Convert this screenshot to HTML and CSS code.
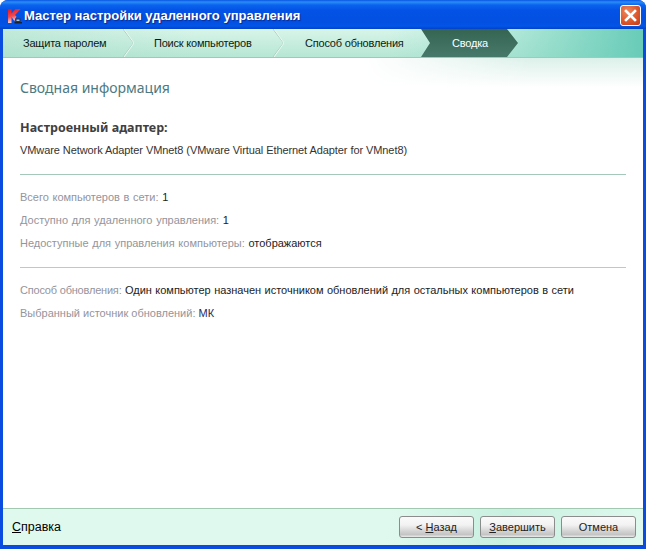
FILE: index.html
```html
<!DOCTYPE html>
<html lang="ru">
<head>
<meta charset="utf-8">
<title>Мастер настройки удаленного управления</title>
<link rel="stylesheet" href="styles.css">
</head>
<body>
<div class="window">
  <header class="titlebar">
    <svg class="appicon" width="16" height="16" viewBox="0 0 16 16">
      <defs><linearGradient id="kred" x1="0" y1="0" x2="0.300" y2="1"><stop offset="0" stop-color="#e8101c"/><stop offset="0.550" stop-color="#f04a50"/><stop offset="1" stop-color="#fbe4e4"/></linearGradient></defs>
      <path d="M1 1h3.500v4.500L8.500 1h5L8 7l1.500 1.500L8 11v1.500H7L4.500 9v6H1z" fill="url(#kred)"/>
      <path d="M8.500 10.500h5v3.500h-5z" fill="#28324a"/>
      <path d="M9.500 11.500h3v1.500h-3z" fill="#b8c8d0"/>
      <path d="M7.500 14h7.500v1.500H7.500z" fill="#1c2230"/>
    </svg>
    <span class="title">Мастер настройки удаленного управления</span>
    <button class="close" aria-label="Закрыть">
      <svg width="13" height="13" viewBox="0 0 13 13"><path d="M2 2l9 9M11 2l-9 9" stroke="#fff" stroke-width="2.600" stroke-linecap="square"/></svg>
    </button>
  </header>
  <div class="client">
    <nav class="tabs">
      <div class="tab tab-a">Защита паролем</div>
      <svg class="sep" width="11" height="28" viewBox="0 0 11 28"><path d="M0 0l10.500 14L0 28" fill="none" stroke="#a9cdbf" stroke-width="1"/><path d="M1 0l10 14L1 28" fill="none" stroke="#e9f8f1" stroke-width="1"/></svg>
      <div class="tab tab-b">Поиск компьютеров</div>
      <svg class="sep" width="11" height="28" viewBox="0 0 11 28"><path d="M0 0l10.500 14L0 28" fill="none" stroke="#a9cdbf" stroke-width="1"/><path d="M1 0l10 14L1 28" fill="none" stroke="#e9f8f1" stroke-width="1"/></svg>
      <div class="tab tab-c">Способ обновления</div>
      <div class="tab tab-active">Сводка</div>
    </nav>
    <main class="content">
      <h1 class="heading">Сводная информация</h1>
      <h2 class="subheading">Настроенный адаптер:</h2>
      <p class="adapter">VMware Network Adapter VMnet8 (VMware Virtual Ethernet Adapter for VMnet8)</p>
      <hr class="rule rule-green">
      <p class="row row-wide"><span class="label">Всего компьютеров в сети:</span> 1</p>
      <p class="row row-wide"><span class="label">Доступно для удаленного управления:</span> 1</p>
      <p class="row row-wide"><span class="label">Недоступные для управления компьютеры:</span> отображаются</p>
      <hr class="rule rule-gray">
      <p class="row row-method"><span class="label label-tight">Способ обновления:</span> Один компьютер назначен источником обновлений для остальных компьютеров в сети</p>
      <p class="row"><span class="label">Выбранный источник обновлений:</span> <span class="value-blue">МК</span></p>
    </main>
    <footer class="footer">
      <a class="help"><u>С</u>правка</a>
      <div class="buttons">
        <button class="btn">&lt; <u>Н</u>азад</button>
        <button class="btn"><u>З</u>авершить</button>
        <button class="btn">Отмена</button>
      </div>
    </footer>
  </div>
</div>
</body>
</html>
```
FILE: styles.css
```css
* { box-sizing: border-box; }
html, body { margin: 0; padding: 0; background: #fff; }
body { width: 646px; height: 549px; overflow: hidden; font-family: "Liberation Sans", Arial, sans-serif; }
.window {
  width: 646px; height: 549px; display: flex; flex-direction: column;
  background: #0a4be0; border-radius: 8px 8px 0 0; overflow: hidden;
  padding: 0 3px 4px;
}
.titlebar {
  height: 29px; margin: 0 -3px; padding: 5px 5px 3px 7px; flex: none;
  display: flex; align-items: center;
  background: linear-gradient(180deg, #0a55e4 0, #2a8cf6 2px, #0a64ee 5px, #0353e6 10px, #0350e2 22px, #0256e8 26px, #0341c8 29px);
}
.appicon { margin-right: 1px; flex: none; }
.title {
  flex: 1; color: #fff; font: bold 13px "Liberation Sans", sans-serif;
  text-shadow: 1px 1px 1px #0a2a90; white-space: nowrap;
}
.close {
  width: 21px; height: 21px; padding: 0; margin: 0; display: flex; align-items: center; justify-content: center;
  border: 1px solid #fff; border-radius: 3px; background: radial-gradient(circle at 35% 30%, #ee8a60, #d9542a 60%, #c23a18);
}
.client { flex: 1; display: flex; flex-direction: column; background: #fff; min-height: 0; }
.tabs {
  height: 29px; flex: none; display: flex; border-bottom: 1px solid #aac4b8;
  background:
    linear-gradient(90deg, rgba(168, 220, 200, 0.45) 0, rgba(200, 240, 224, 0) 30%, rgba(200, 240, 224, 0) 60%, rgba(150, 222, 204, 0.6) 80%, rgba(104, 204, 184, 1) 100%),
    linear-gradient(180deg, #d8f5ea 0, #b6e6d4 100%);
  font-size: 11px; letter-spacing: -0.2px; color: #0c1a14;
}
.tabs .sep { flex: none; }
.tab { height: 28px; display: flex; align-items: center; white-space: nowrap; flex: none; }
.tab-a { width: 120px; padding-left: 20px; }
.tab-b { width: 139px; padding-left: 20px; }
.tab-c { width: 137px; padding-left: 21px; }
.tab-active {
  width: 97px; padding-left: 31px; color: #fff;
  background: linear-gradient(180deg, #356452, #47796a);
  clip-path: polygon(0 0, 86px 0, 97px 14px, 86px 28px, 0 28px, 9px 14px);
}
.content {
  flex: 1; min-height: 0; padding: 21px 17px 0 17px;
  background: #fff;
  position: relative;
}
.content::before {
  content: ""; position: absolute; right: 0; top: 0; width: 280px; height: 30px;
  background: linear-gradient(180deg, #dcf0ea 0, #fff 100%);
  -webkit-mask-image: linear-gradient(90deg, transparent, #000 60%);
  mask-image: linear-gradient(90deg, transparent, #000 60%);
}
.heading { margin: 0; font: normal 14px/18px "Noto Sans", sans-serif; color: #4d7a82; position: relative; }
.subheading { margin: 23px 0 0; font: bold 12.500px/16px "Noto Sans", sans-serif; color: #404040; }
.adapter { margin: 6px 0 0; font-size: 11px; letter-spacing: -0.08px; line-height: 16px; color: #333; }
.rule { height: 1px; border: 0; margin: 0; }
.rule-green { margin: 16px 0 0; background: #a6c8ba; }
.rule-gray { margin: 16px 0 0; background: #c0c8c4; }
.row { margin: 0; font-size: 11px; line-height: 16px; color: #222; padding-top: 7px; }
.rule + .row { padding-top: 14px; }
.row-wide { word-spacing: 0.6px; }
.row-method { word-spacing: 0.35px; }
.label { color: #94949c; }
.label-tight { letter-spacing: -0.2px; word-spacing: 0; }
.value-blue { color: #2a2a5a; }
.footer {
  height: 37px; flex: none; display: flex; align-items: center; justify-content: space-between;
  padding: 0 7px 0 9px; border-top: 1px solid #a2c8b2;
  background: linear-gradient(100deg, #e0f9ef 60%, #c8f0e0 78%, #e0f9ef 100%);
}
.help { font-size: 12.500px; color: #000; }
.buttons { display: flex; gap: 6px; }
.btn {
  width: 75px; height: 22px; padding: 0; font: 11px "Liberation Sans", Arial, sans-serif; color: #222;
  border: 1px solid #8c8c8c; border-radius: 3px;
  background: linear-gradient(180deg, #fafafa 0, #f2f2f2 40%, #d2d2d2 72%, #c4c4c4 88%, #ececec 100%);
}
```
